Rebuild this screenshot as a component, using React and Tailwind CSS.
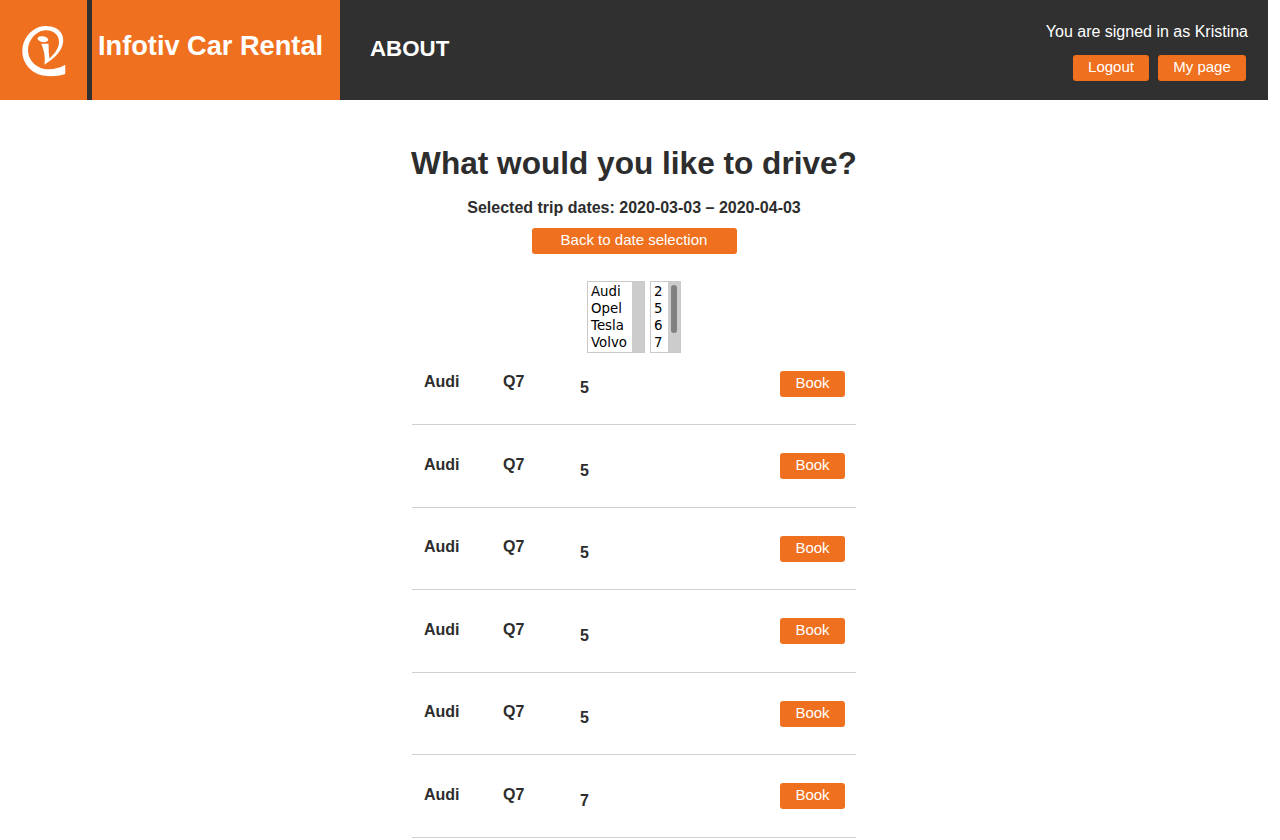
import React from 'react';

const cars = [
  { make: 'Audi', model: 'Q7', seats: 5 },
  { make: 'Audi', model: 'Q7', seats: 5 },
  { make: 'Audi', model: 'Q7', seats: 5 },
  { make: 'Audi', model: 'Q7', seats: 5 },
  { make: 'Audi', model: 'Q7', seats: 5 },
  { make: 'Audi', model: 'Q7', seats: 7 },
];

const Logo = () => (
  <svg width="63" height="62.4" viewBox="0 0 58 60" fill="#fff">
    <path d="M48 41 L48 50 C38 53 24 54 15 46 C7 39 5 29 8 20 C12 9 22 3 31 4 C41 4 47 11 46 19 C45 28 38 34 31 39 L28 41 C29 35 28 28 25 21 L32 21 C32 27 32 32 33 35 C37 31 42 26 42 19 C42 13 37 8 30 8 C22 8 15 14 12.5 23 C11 32 15 40 24 44 C32 47 41 45 48 41 Z" />
    <ellipse cx="26.5" cy="16.5" rx="5.2" ry="2.8" transform="rotate(10 26.5 16.5)" />
  </svg>
);

const OrangeButton = ({ className, children }) => (
  <button className={`bg-[#ef701e] text-white text-[15px] leading-[22px] pb-[2px] h-[26px] rounded-[3px] ${className}`}>{children}</button>
);

const ListBox = ({ items, width, thumb }) => (
  <div className="flex h-[72px] border border-[#cdc9c5] bg-white" style={{ width }}>
    <div className="flex-1 pl-[3px] pt-px text-[13.33px] leading-[17px] text-black font-['DejaVu_Sans',sans-serif]">
      {items.map((item) => <div key={item}>{item}</div>)}
    </div>
    <div className="w-3 bg-[#cccccc] flex justify-center pt-[3px]">
      {thumb && <div className="w-[6px] h-[48px] rounded-full bg-[#808080]" />}
    </div>
  </div>
);

export default function App() {
  return (
    <div className="w-[1268px] h-[840px] overflow-hidden bg-white text-[#2d2d2d] font-['Liberation_Sans',sans-serif]">
      <header className="h-[100px] bg-[#303030] flex text-white">
        <div className="w-[87px] bg-[#ef701e] flex items-center justify-center pl-[3px] pt-[6px]"><Logo /></div>
        <div className="w-[248px] ml-[5px] bg-[#ef701e] pl-[6px] pt-[28px] text-[27.2px] leading-[36px] font-bold whitespace-nowrap">Infotiv Car Rental</div>
        <div className="ml-[30px] pt-[34px] text-[22.3px] leading-[30px] font-bold">ABOUT</div>
        <div className="ml-auto pr-5 pt-[21px] flex flex-col items-end">
          <div className="text-[16px] leading-[22px]">You are signed in as Kristina</div>
          <div className="flex gap-[9px] mt-3 mr-[2px]">
            <OrangeButton className="w-[76px]">Logout</OrangeButton>
            <OrangeButton className="w-[88px]">My page</OrangeButton>
          </div>
        </div>
      </header>
      <main className="flex flex-col items-center">
        <h1 className="mt-[43px] text-[31.6px] leading-[40px] font-bold">What would you like to drive?</h1>
        <p className="mt-[14px] text-[16px] leading-[22px] font-bold">Selected trip dates: 2020-03-03 – 2020-04-03</p>
        <OrangeButton className="w-[205px] mt-[9px]">Back to date selection</OrangeButton>
        <div className="flex gap-[5px] mt-[27px]">
          <ListBox items={['Audi', 'Opel', 'Tesla', 'Volvo']} width={58} />
          <ListBox items={['2', '5', '6', '7']} width={31} thumb />
        </div>
        <div className="w-[444px] mt-[-1px]">
          {cars.map((car, idx) => (
            <div key={idx} className="group h-[82.5px] first:h-[73px] pt-[28.9px] first:pt-[19px] border-b border-[#d0d0d0] flex items-start text-[16px] font-bold">
              <div className="w-[91px] pl-3 leading-[22px]">{car.make}</div>
              <div className="w-[77px] leading-[22px]">{car.model}</div>
              <div className="pt-[6px] leading-[22px]">{car.seats}</div>
              <div className="ml-auto pr-[11px] mt-[-0.9px] group-first:mt-0">
                <OrangeButton className="w-[65px] font-normal">Book</OrangeButton>
              </div>
            </div>
          ))}
        </div>
      </main>
    </div>
  );
}
